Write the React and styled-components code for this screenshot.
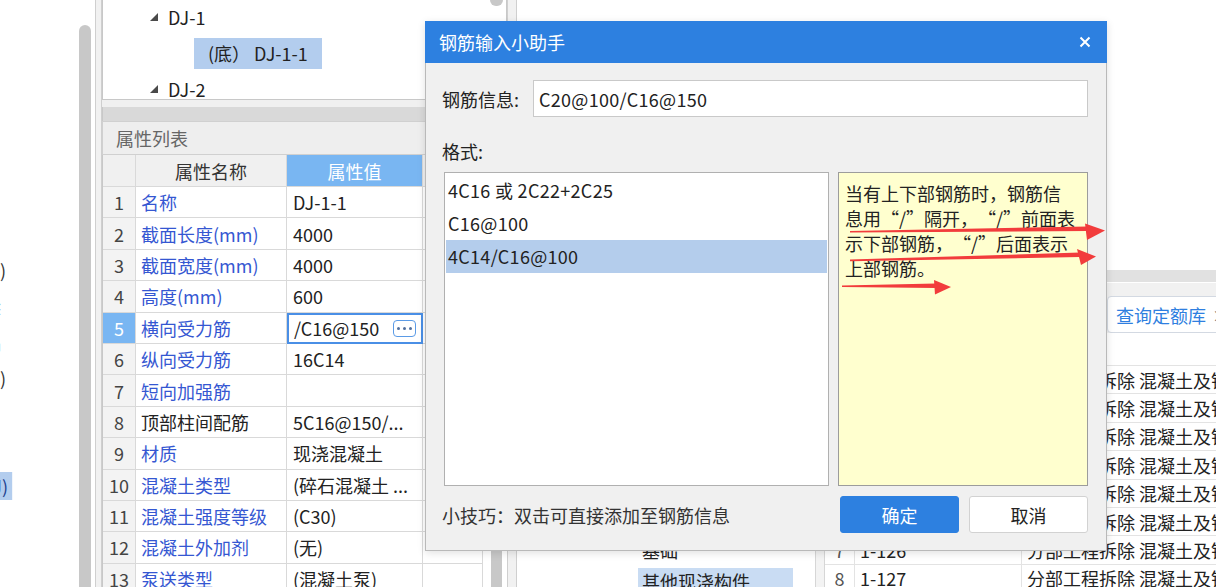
import styled, { createGlobalStyle } from "styled-components";

const GlobalStyle = createGlobalStyle`
  html, body {
    margin: 0;
    padding: 0;
  }
  body {
    font-family: "Noto Sans CJK SC", "Noto Sans", sans-serif;
    background: #fff;
    overflow: hidden;
    text-spacing-trim: space-all;
  }
`;

const Screen = styled.div`
  position: relative;
  display: flex;
  width: 1216px;
  height: 587px;
  overflow: hidden;
  background: #fff;
  font-size: 18px;
  color: #222;
`;

/* ---------- left tree (mostly scrolled out) ---------- */

const LeftPane = styled.div`
  flex: none;
  width: 95px;
  display: flex;
  background: #fff;
`;

const LeftList = styled.div`
  width: 78px;
  padding-top: 252px;
  overflow: hidden;
`;

const LeftRow = styled.div`
  height: 36px;
  display: flex;
  align-items: center;
`;

const Peek = styled.span`
  display: inline-block;
  flex: none;
  white-space: nowrap;
  line-height: 28px;
  padding: 0 ${(p) => (p.$selected ? 4 : 0)}px;
  background: ${(p) => (p.$selected ? "#b3cdee" : "transparent")};
  color: ${(p) => (p.$selected ? "#1d3f8f" : "#333")};
  transform: translateX(calc(-100% + ${(p) => p.$peek}px));
`;

const ScrollTrack = styled.div`
  flex: none;
  width: ${(p) => p.$w}px;
  margin-left: ${(p) => p.$ml || 0}px;
  padding-top: ${(p) => p.$top || 0}px;
  display: flex;
  flex-direction: column;
  box-sizing: border-box;
`;

const Thumb = styled.div`
  flex: ${(p) => (p.$h ? "none" : 1)};
  height: ${(p) => (p.$h ? `${p.$h}px` : "auto")};
  margin: 0 ${(p) => p.$mr || 0}px 0 ${(p) => p.$ml || 0}px;
  background: #c8c8c8;
  border-radius: ${(p) => (p.$bottom ? "0 0 6px 6px" : "6px 6px 0 0")};
`;

const Splitter = styled.div`
  flex: none;
  width: ${(p) => p.$w}px;
  box-sizing: border-box;
  background: #f1f1f1;
  border-left: 1px solid #cfcfcf;
  border-right: 1px solid #cfcfcf;
`;

/* ---------- middle: tree + property list ---------- */

const MidPane = styled.div`
  flex: none;
  width: 405px;
  display: flex;
  flex-direction: column;
  background: #f0f0f0;
`;

const TreePanel = styled.div`
  height: 100px;
  flex: none;
  display: flex;
  box-sizing: border-box;
  background: #fff;
  border: 1px solid #c8c8c8;
  border-top: none;
  overflow: hidden;
`;

const TreeList = styled.div`
  flex: 1;
  margin-top: -1px;
`;

const TreeRow = styled.div`
  height: 36px;
  display: flex;
  align-items: center;
  padding-left: ${(p) => p.$indent}px;
  white-space: nowrap;
`;

const Caret = styled.svg`
  width: 8px;
  height: 8px;
  margin-right: 10px;
  flex: none;
`;

const TreeLabel = styled.span`
  display: inline-block;
  line-height: 31px;
  padding: 0 ${(p) => (p.$selected ? 14 : 0)}px;
  background: ${(p) => (p.$selected ? "#b3cdee" : "transparent")};
`;

const PaneGap = styled.div`
  height: 7px;
  flex: none;
`;

const SplitBar = styled.div`
  height: 14px;
  flex: none;
  background: #d9d9d9;
  border-left: 1px solid #c8c8c8;
`;

const PropTitle = styled.div`
  height: 34px;
  flex: none;
  box-sizing: border-box;
  border: 1px solid #d0d0d0;
  background: #eeeeee;
  color: #666;
  padding-left: 13px;
  line-height: 32px;
`;

const PropBody = styled.div`
  flex: 1;
  display: flex;
  background: #fff;
  border-left: 1px solid #c8c8c8;
`;

const PropTable = styled.div`
  display: grid;
  grid-template-columns: 33px 151px 136px 60px;
  grid-template-rows: 32px repeat(13, 31.4px);
  align-content: start;
`;

const PropRow = styled.div`
  display: contents;
`;

const Cell = styled.div`
  display: flex;
  align-items: center;
  box-sizing: border-box;
  border-right: 1px solid #d9d9d9;
  border-bottom: 1px solid #d9d9d9;
  white-space: nowrap;
  overflow: hidden;
  line-height: 1;
`;

const HeadCell = styled(Cell)`
  justify-content: center;
  background: ${(p) => (p.$active ? "#79b6f2" : "#f0f0f0")};
  color: ${(p) => (p.$active ? "#fff" : "#333")};
`;

const NumCell = styled(Cell)`
  justify-content: center;
  background: ${(p) => (p.$active ? "#79b6f2" : "#f3f3f3")};
  color: ${(p) => (p.$active ? "#fff" : "#444")};
`;

const NameCell = styled(Cell)`
  padding-left: 5px;
  color: ${(p) => (p.$plain ? "#222" : "#3557d2")};
`;

const ValueCell = styled(Cell)`
  padding-left: 6px;
  padding-right: 5px;
  justify-content: space-between;
  ${(p) => p.$editing && "border: 2px solid #4a8fe6; padding-left: 5px;"}
`;

const MoreButton = styled.span`
  display: flex;
  align-items: center;
  justify-content: center;
  gap: 3px;
  width: 23px;
  height: 17px;
  box-sizing: border-box;
  border: 1px solid #5b9be6;
  border-radius: 4px;
  background: #fff;
`;

const Dot = styled.i`
  width: 3px;
  height: 3px;
  background: #51709e;
  border-radius: 50%;
`;

/* ---------- workspace ---------- */

const Workspace = styled.div`
  flex: 1;
  display: flex;
  flex-direction: column;
`;

const WorkTop = styled.div`
  height: 270px;
  flex: none;
  background: #fff;
`;

const WorkBottom = styled.div`
  flex: 1;
  min-height: 0;
  display: flex;
`;

const CategoryPane = styled.div`
  flex: none;
  width: 298px;
  display: flex;
  flex-direction: column;
  justify-content: flex-end;
`;

const CategoryList = styled.div`
  margin-bottom: -9.5px;
  padding-left: 121px;
`;

const CategoryItem = styled.div`
  height: 31px;
  display: flex;
  align-items: center;
`;

const CategoryLabel = styled.span`
  line-height: 26px;
  padding: 0 4px;
  min-width: ${(p) => (p.$selected ? "155px" : "0")};
  box-sizing: border-box;
  background: ${(p) => (p.$selected ? "#c9dcf3" : "transparent")};
`;

const VDivider = styled.div`
  flex: none;
  width: 10px;
  box-sizing: border-box;
  background: #f3f3f3;
  border-left: 1px solid #d6d6d6;
  border-right: 1px solid #d6d6d6;
`;

const QuotaPane = styled.div`
  flex: 1;
  display: flex;
  flex-direction: column;
  min-width: 0;
  overflow: hidden;
`;

const QuotaSplit = styled.div`
  height: 12px;
  flex: none;
  background: #e1e1e1;
  border-bottom: 1px solid #fff;
`;

const TabStrip = styled.div`
  height: 50px;
  flex: none;
  display: flex;
  align-items: flex-end;
  padding-left: 282px;
  background: #f1f1f1;
`;

const Tab = styled.div`
  height: 37px;
  display: flex;
  align-items: center;
  gap: 6px;
  padding: 0 10px 0 8px;
  box-sizing: border-box;
  border: 1px solid #d3d9e2;
  border-radius: 4px;
  background: #fff;
  color: #2f7fe0;
  white-space: nowrap;
`;

const TabClose = styled.span`
  color: #777;
  font-size: 16px;
`;

const QuotaHead = styled.div`
  height: 32px;
  flex: none;
  border-bottom: 1px solid #e3e3e3;
`;

const QuotaRow = styled.div`
  height: 28.4px;
  flex: none;
  display: grid;
  grid-template-columns: 30px 167px 1fr;
  box-sizing: border-box;
  border-bottom: 1px solid #e3e3e3;
  white-space: nowrap;
`;

const QuotaCell = styled.div`
  display: flex;
  align-items: center;
  justify-content: ${(p) => (p.$center ? "center" : "flex-start")};
  padding-left: ${(p) => (p.$center ? 0 : 5)}px;
  border-right: 1px solid #e3e3e3;
  color: ${(p) => (p.$center ? "#555" : "#222")};
  overflow: hidden;
`;

/* ---------- dialog ---------- */

const Dialog = styled.div`
  position: absolute;
  left: 425px;
  top: 21px;
  width: 682px;
  height: 530px;
  box-sizing: border-box;
  display: flex;
  flex-direction: column;
  background: #f0f0f0;
  border: 1px solid #b9b9b9;
  border-top: none;
  box-shadow: 0 2px 8px rgba(0, 0, 0, 0.12);
`;

const TitleBar = styled.div`
  height: 42px;
  flex: none;
  display: flex;
  align-items: center;
  justify-content: space-between;
  padding: 0 16px 0 14px;
  margin: 0 -1px;
  background: #2d80e0;
  color: #fff;
`;

const DialogBody = styled.div`
  flex: 1;
  display: flex;
  flex-direction: column;
  padding: 17px 18px 17px 16px;
`;

const FieldRow = styled.div`
  display: flex;
  align-items: center;
  height: 37px;
`;

const FieldLabel = styled.span`
  width: 91px;
  flex: none;
  color: #222;
`;

const TextInput = styled.input`
  flex: 1;
  height: 37px;
  box-sizing: border-box;
  border: 1px solid #c9c9c9;
  background: #fff;
  padding: 0 5px;
  font: inherit;
  font-size: 18px;
  letter-spacing: 0.3px;
  color: #222;
  outline: none;
`;

const SectionLabel = styled.div`
  margin-top: 22px;
  height: 24px;
  line-height: 24px;
`;

const Boxes = styled.div`
  margin-top: 9px;
  height: 314px;
  display: flex;
  gap: 9px;
  padding-left: 2px;
`;

const FormatList = styled.div`
  width: 385px;
  flex: none;
  box-sizing: border-box;
  border: 1px solid #b0b0b0;
  background: #fff;
  padding: 1px;
`;

const FormatItem = styled.div`
  height: 33px;
  line-height: 33px;
  padding-left: 2px;
  white-space: nowrap;
  letter-spacing: 0.3px;
  background: ${(p) => (p.$selected ? "#b4cdec" : "transparent")};
`;

const NoteBox = styled.div`
  flex: 1;
  box-sizing: border-box;
  border: 1px solid #9c9c9c;
  background: #ffffcf;
  padding: 8px 4px 8px 6px;
  line-height: 25px;
  white-space: nowrap;
  overflow: hidden;
`;

const Footer = styled.div`
  margin-top: 10px;
  height: 37px;
  display: flex;
  align-items: center;
  gap: 10px;
`;

const Tip = styled.span`
  flex: 1;
  color: #333;
`;

const Button = styled.button`
  width: 119px;
  height: 37px;
  padding: 0;
  box-sizing: border-box;
  border-radius: 3px;
  font: inherit;
  font-size: 18px;
  line-height: 1;
  border: 1px solid ${(p) => (p.$primary ? "#2d80e0" : "#d2d2d2")};
  background: ${(p) => (p.$primary ? "#2d80e0" : "#fff")};
  color: ${(p) => (p.$primary ? "#fff" : "#222")};
`;

const Overlay = styled.svg`
  position: absolute;
  left: 0;
  top: 0;
  pointer-events: none;
`;

const props = [
  { no: 1, name: "名称", value: "DJ-1-1" },
  { no: 2, name: "截面长度(mm)", value: "4000" },
  { no: 3, name: "截面宽度(mm)", value: "4000" },
  { no: 4, name: "高度(mm)", value: "600" },
  { no: 5, name: "横向受力筋", value: "/C16@150", editing: true },
  { no: 6, name: "纵向受力筋", value: "16C14" },
  { no: 7, name: "短向加强筋", value: "" },
  { no: 8, name: "顶部柱间配筋", value: "5C16@150/...", plain: true },
  { no: 9, name: "材质", value: "现浇混凝土" },
  { no: 10, name: "混凝土类型", value: "(碎石混凝土 ..." },
  { no: 11, name: "混凝土强度等级", value: "(C30)" },
  { no: 12, name: "混凝土外加剂", value: "(无)" },
  { no: 13, name: "泵送类型", value: "(混凝土泵)" },
];

const formats = ["4C16 或 2C22+2C25", "C16@100", "4C14/C16@100"];

const noteLines = [
  "当有上下部钢筋时，钢筋信",
  "息用“/”隔开，“/”前面表",
  "示下部钢筋，“/”后面表示",
  "上部钢筋。",
];

const quotaRows = [0, 1, 2, 3, 4, 5, 6, 7].map((i) => ({
  no: i + 1,
  code: `1-${120 + i}`,
  name: "分部工程拆除 混凝土及钢筋混凝土拆除",
}));

// red annotation arrows drawn over the screenshot
const arrows = [
  {
    shaft: "M850 231 L1088 226.5 L1088 231 L850 232.6 Z",
    head: "M1085 223.5 L1105 230.5 L1087 240 Z",
  },
  {
    shaft: "M850 259.6 L1080 252.6 L1080 257 L850 261.2 Z",
    head: "M1077 249 L1096 256.5 L1081 265 Z",
  },
  {
    shaft: "M842 285.4 L936 283.4 L936 288 L842 287 Z",
    head: "M934 280 L951 287 L935 294.5 Z",
  },
];

function TreeCaret() {
  return (
    <Caret viewBox="0 0 8 8">
      <path d="M8 0 L8 8 L0 8 Z" fill="#4a4a4a" />
    </Caret>
  );
}

export default function App() {
  return (
    <>
      <GlobalStyle />
      <Screen>
        <LeftPane>
          <LeftList>
            <LeftRow>
              <Peek $peek={6}>独立基础(DJ)</Peek>
            </LeftRow>
            <LeftRow>
              <Peek $peek={1}>基础梁</Peek>
            </LeftRow>
            <LeftRow>
              <Peek $peek={1}>筏板基础</Peek>
            </LeftRow>
            <LeftRow>
              <Peek $peek={6}>条形基础(TJ)</Peek>
            </LeftRow>
            <LeftRow />
            <LeftRow />
            <LeftRow>
              <Peek $peek={12} $selected>
                独立基础(J)
              </Peek>
            </LeftRow>
          </LeftList>
          <ScrollTrack $w={12} $ml={1} $top={25}>
            <Thumb />
          </ScrollTrack>
        </LeftPane>
        <Splitter $w={7} />

        <MidPane>
          <TreePanel>
            <TreeList>
              <TreeRow $indent={47}>
                <TreeCaret />
                <TreeLabel>DJ-1</TreeLabel>
              </TreeRow>
              <TreeRow $indent={91}>
                <TreeLabel $selected>(底） DJ-1-1</TreeLabel>
              </TreeRow>
              <TreeRow $indent={47}>
                <TreeCaret />
                <TreeLabel>DJ-2</TreeLabel>
              </TreeRow>
            </TreeList>
            <ScrollTrack $w={19}>
              <Thumb $h={6} $bottom $ml={3} $mr={3} />
            </ScrollTrack>
          </TreePanel>
          <PaneGap />
          <SplitBar />
          <PropTitle>属性列表</PropTitle>
          <PropBody>
            <PropTable>
              <HeadCell />
              <HeadCell>属性名称</HeadCell>
              <HeadCell $active>属性值</HeadCell>
              <HeadCell />
              {props.map((row) => (
                <PropRow key={row.no}>
                  <NumCell $active={row.editing}>{row.no}</NumCell>
                  <NameCell $plain={row.plain}>{row.name}</NameCell>
                  <ValueCell $editing={row.editing}>
                    {row.value}
                    {row.editing && (
                      <MoreButton>
                        <Dot />
                        <Dot />
                        <Dot />
                      </MoreButton>
                    )}
                  </ValueCell>
                  <Cell />
                </PropRow>
              ))}
            </PropTable>
            <ScrollTrack $w={23} $top={300}>
              <Thumb $ml={8} $mr={4} />
            </ScrollTrack>
          </PropBody>
        </MidPane>
        <Splitter $w={10} />

        <Workspace>
          <WorkTop />
          <WorkBottom>
            <CategoryPane>
              <CategoryList>
                <CategoryItem>
                  <CategoryLabel>基础</CategoryLabel>
                </CategoryItem>
                <CategoryItem>
                  <CategoryLabel $selected>其他现浇构件</CategoryLabel>
                </CategoryItem>
              </CategoryList>
            </CategoryPane>
            <VDivider />
            <QuotaPane>
              <QuotaSplit />
              <TabStrip>
                <Tab>
                  查询定额库
                  <TabClose>×</TabClose>
                </Tab>
              </TabStrip>
              <QuotaHead />
              {quotaRows.map((r) => (
                <QuotaRow key={r.no}>
                  <QuotaCell $center>{r.no}</QuotaCell>
                  <QuotaCell>{r.code}</QuotaCell>
                  <QuotaCell>{r.name}</QuotaCell>
                </QuotaRow>
              ))}
            </QuotaPane>
          </WorkBottom>
        </Workspace>

        <Dialog>
          <TitleBar>
            <span>钢筋输入小助手</span>
            <svg width="12" height="12" viewBox="0 0 12 12">
              <path
                d="M1.5 1.5 L10.5 10.5 M10.5 1.5 L1.5 10.5"
                stroke="#fff"
                strokeWidth="2"
              />
            </svg>
          </TitleBar>
          <DialogBody>
            <FieldRow>
              <FieldLabel>钢筋信息:</FieldLabel>
              <TextInput readOnly value="C20@100/C16@150" />
            </FieldRow>
            <SectionLabel>格式:</SectionLabel>
            <Boxes>
              <FormatList>
                {formats.map((f, i) => (
                  <FormatItem key={f} $selected={i === 2}>
                    {f}
                  </FormatItem>
                ))}
              </FormatList>
              <NoteBox>
                {noteLines.map((line) => (
                  <div key={line}>{line}</div>
                ))}
              </NoteBox>
            </Boxes>
            <Footer>
              <Tip>小技巧：双击可直接添加至钢筋信息</Tip>
              <Button $primary>确定</Button>
              <Button>取消</Button>
            </Footer>
          </DialogBody>
        </Dialog>

        <Overlay width="1216" height="587" viewBox="0 0 1216 587">
          {arrows.map((a, i) => (
            <g key={i} fill="#f23c3c">
              <path d={a.shaft} />
              <path d={a.head} />
            </g>
          ))}
        </Overlay>
      </Screen>
    </>
  );
}
